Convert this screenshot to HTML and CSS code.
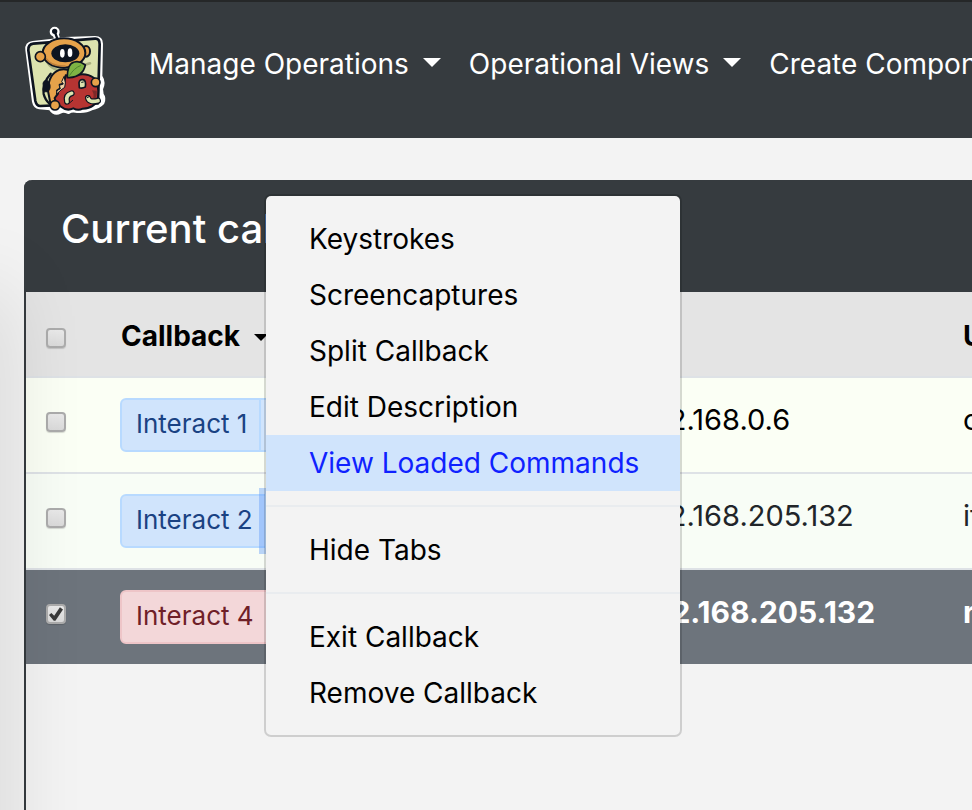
FILE: index.html
```html
<!DOCTYPE html>
<html lang="en">
<head>
<meta charset="utf-8">
<title>Callbacks</title>
<link rel="stylesheet" href="styles.css">
</head>
<body>
<header class="navbar">
  <a class="brand" href="#" aria-label="Home">
    <svg class="logo" viewBox="0 0 330 330" aria-hidden="true">
      <g fill="#fff" stroke="#fff" stroke-width="12" stroke-linejoin="round">
        <circle cx="134" cy="50" r="9"/>
        <path d="M134 50L143 76" stroke-width="18"/>
        <path d="M68 84L128 77L165 72L255 69Q273 69 273 86L271 184Q283 203 273 222L275 238Q284 250 277 264Q266 276 245 280Q228 290 202 288Q185 284 175 291Q160 284 150 290Q134 299 121 280L88 277Q75 275 72 260L52 105Q50 86 68 84Z"/>
      </g>
      <g stroke="#0d1420" stroke-linejoin="round" stroke-linecap="round">
        <path d="M70 86L255 71Q269 70 269 88L264 265L92 273Q80 274 76 258L55 106Q54 88 70 86Z" fill="#dce3ae" stroke-width="8"/>
        <path d="M104 125Q120 172 170 166L240 145" fill="none" stroke="#a9b080" stroke-width="8"/>
        <path d="M144 76L135 52" fill="none" stroke-width="7"/>
        <circle cx="134" cy="49" r="5" fill="#0d1420" stroke-width="6"/>
        <path d="M150 164Q114 176 114 228L121 264L150 272L170 215L194 171Q170 160 150 164Z" fill="#e6a24a" stroke-width="6"/>
        <path d="M122 176Q96 205 101 237Q105 254 119 267" fill="none" stroke-width="7"/>
        <path d="M99 203Q101 195 112 196Q126 210 118 226Q112 234 101 229Z" fill="#0d1420" stroke-width="2"/>
        <ellipse cx="228" cy="109" rx="12" ry="16" fill="#e6a24a" stroke-width="6"/>
        <ellipse cx="162" cy="114" rx="64" ry="44" fill="#e6a24a" stroke-width="6"/>
        <path d="M108 130Q124 155 165 153" fill="none" stroke="#bf803b" stroke-width="5"/>
        <ellipse cx="166" cy="115" rx="42" ry="27" fill="#0d1420" stroke="none"/>
        <circle cx="91" cy="125" r="15" fill="#e6a24a" stroke-width="5"/>
        <path d="M167 181L188 184Q225 170 252 189Q268 203 264 246Q258 279 218 281Q204 288 190 280Q170 290 151 274Q136 262 134 249L144 236L141 227L151 220L149 209L162 205Z" fill="#b63432" stroke-width="6"/>
        <path d="M246 226Q258 247 240 264L252 257Q263 242 260 227Z" fill="#7d2929" stroke="none"/>
        <path d="M162 185L155 200L160 207L148 211L151 221L141 227L139 238L153 225L164 217L166 205Z" fill="#f2d4a6" stroke-width="3"/>
        <path d="M172 188Q172 145 193 141Q210 137 226 150Q219 185 178 188Z" fill="#7eb344" stroke-width="5"/>
        <path d="M179 181Q192 159 211 152" fill="none" stroke="#4f8430" stroke-width="3"/>
        <path d="M208 218L207 203Q209 192 219 194Q229 196 226 216Q216 221 208 218Z" fill="#dce3ae" stroke-width="5"/>
        <path d="M185 235Q166 240 171 260M234 249Q238 264 264 257" fill="none" stroke-width="18"/>
        <path d="M185 235Q166 240 171 260M234 249Q238 264 264 257" fill="none" stroke="#dce3ae" stroke-width="11"/>
        <path d="M181 262L188 256M239 244L232 248M215 202L220 201" fill="none" stroke-width="3"/>
        <circle cx="257" cy="202" r="13" fill="#e6a24a" stroke-width="5"/>
        <circle cx="135" cy="271" r="14" fill="#e6a24a" stroke-width="5"/>
      </g>
      <g fill="#fff"><ellipse cx="157" cy="115" rx="7" ry="13"/><ellipse cx="180" cy="113" rx="7" ry="13"/></g>
    </svg>
  </a>
  <nav class="nav">
    <a href="#">Manage Operations<span class="caret"></span></a>
    <a href="#">Operational Views<span class="caret"></span></a>
    <a href="#">Create Components<span class="caret"></span></a>
  </nav>
</header>
<main class="content">
  <section class="panel">
    <h1 class="panel-title">Current callbacks</h1>
    <table class="callbacks">
      <thead>
        <tr>
          <th class="col-check"><input type="checkbox" aria-label="Select all"></th>
          <th class="col-callback">Callback<span class="caret sort"></span></th>
          <th class="col-ip">IP</th>
          <th>User</th>
        </tr>
      </thead>
      <tbody>
        <tr class="row-first">
          <td class="col-check"><input type="checkbox" aria-label="Select callback 1"></td>
          <td class="col-button"><div class="group"><button type="button">Interact 1</button><button type="button" class="toggle" aria-label="Callback 1 menu"><span class="caret"></span></button></div></td>
          <td>192.168.0.6</td>
          <td>c</td>
        </tr>
        <tr class="row-second">
          <td class="col-check"><input type="checkbox" aria-label="Select callback 2"></td>
          <td class="col-button"><div class="group"><button type="button">Interact 2</button><button type="button" class="toggle active" aria-label="Callback 2 menu"><span class="caret"></span></button></div></td>
          <td>192.168.205.132</td>
          <td>its</td>
        </tr>
        <tr class="row-selected">
          <td class="col-check"><input type="checkbox" checked aria-label="Select callback 4"></td>
          <td class="col-button"><div class="group danger"><button type="button">Interact 4</button><button type="button" class="toggle" aria-label="Callback 4 menu"><span class="caret"></span></button></div></td>
          <td>192.168.205.132</td>
          <td>root</td>
        </tr>
      </tbody>
    </table>
    <div class="menu">
      <a href="#">Keystrokes</a>
      <a href="#">Screencaptures</a>
      <a href="#">Split Callback</a>
      <a href="#">Edit Description</a>
      <a href="#" class="current">View Loaded Commands</a>
      <hr>
      <a href="#">Hide Tabs</a>
      <hr>
      <a href="#">Exit Callback</a>
      <a href="#">Remove Callback</a>
    </div>
  </section>
</main>
</body>
</html>
```
FILE: styles.css
```css
* { box-sizing: border-box; }

body {
  margin: 0;
  min-height: 100vh;
  display: flex;
  flex-direction: column;
  overflow: hidden;
  background: #f3f3f3;
  color: #000;
  font: 28px/42px Inter, "Liberation Sans", sans-serif;
}

/* soft shade along the left edge of the window */
body::after {
  content: "";
  position: fixed;
  top: 290px;
  bottom: -120px;
  left: -40px;
  width: 40px;
  box-shadow: 0 0 80px rgba(0, 0, 0, 0.18);
  pointer-events: none;
}

a { color: inherit; text-decoration: none; }

.navbar {
  display: flex;
  align-items: flex-start;
  gap: 29px;
  height: 138px;
  padding: 13px 0 0 10px;
  border-top: 2px solid #252728;
  background: #363b3f;
  color: #fff;
}

.brand { flex: none; line-height: 0; }
.logo { width: 110px; height: 110px; }

.nav {
  display: flex;
  gap: 28px;
  padding-top: 28px;
  white-space: nowrap;
}

.caret {
  display: inline-block;
  width: 0;
  margin-left: 14px;
  border: 9px solid transparent;
  border-top-color: currentColor;
  border-bottom: 0;
  vertical-align: 7px;
}

.content {
  flex: 1;
  display: flex;
  padding: 42px 0 0 24px;
}

.panel {
  position: relative;
  flex: 1;
  min-width: 0;
  border-left: 2px solid #363b3f;
  border-radius: 8px 0 0 0;
  background: #f3f3f3;
}

.panel-title {
  height: 112px;
  margin: 0 0 0 -2px;
  padding: 23px 37px;
  border-radius: 8px 0 0 0;
  background: #363b3f;
  color: #fff;
  font-size: 40px;
  line-height: 52px;
  font-weight: 500;
}

.callbacks {
  width: 100%;
  table-layout: fixed;
  border-collapse: separate;
  border-spacing: 0;
}

.callbacks th,
.callbacks td {
  height: 96px;
  padding: 21px 0 0 24px;
  border-bottom: 2px solid #dee2e6;
  vertical-align: top;
  text-align: left;
  white-space: nowrap;
  overflow: hidden;
}

.callbacks td { font-size: 29px; }

.callbacks th {
  height: 86px;
  padding-top: 23px;
  background: #e4e4e4;
}

.callbacks .col-check {
  width: 71px;
  padding: 34px 0 0 20px;
  line-height: 0;
}

.callbacks th.col-check { padding-top: 36px; }

.col-callback { width: 518px; }
.col-ip { width: 324px; }
.callbacks .col-button { padding: 20px 0 0 23px; }

.sort { border-width: 7px; border-bottom: 0; vertical-align: 5px; }

.row-first { background: #fbfff5; }
.row-second { background: #f8fdf6; color: #212529; }
.row-selected { background: #6d747c; color: #fff; font-weight: 700; }
.callbacks .row-selected td { height: 94px; border-bottom: 0; font-size: 30px; }

input[type="checkbox"] {
  appearance: none;
  position: relative;
  width: 20px;
  height: 20px;
  margin: 0;
  border: 2px solid #acacac;
  border-radius: 4px;
  background: linear-gradient(#e9e9e9, #dadada);
  box-shadow: 0 1px 1px rgba(0, 0, 0, 0.15);
}

input[type="checkbox"]:checked::after {
  content: "";
  position: absolute;
  inset: 1px;
  background: #3a3a3a;
  clip-path: polygon(0 58%, 17% 43%, 37% 62%, 78% 2%, 100% 17%, 46% 98%, 34% 98%);
}

.group { display: flex; }

.group button {
  height: 54px;
  padding: 0 12px 2px 14px;
  border: 2px solid #b8daff;
  border-radius: 6px 0 0 6px;
  background: #d0e4fc;
  color: #1a4283;
  font: 400 26px/48px Inter, "Liberation Sans", sans-serif;
}

.group .toggle { margin-left: -2px; border-radius: 0 6px 6px 0; }
.group .toggle .caret { margin-left: 0; }
.group .active { box-shadow: 0 0 0 6px rgba(90, 150, 250, 0.4); }
.danger button { border-color: #eec5c8; background: #f3d7d9; color: #6f2028; }

.menu {
  position: absolute;
  top: 14px;
  left: 238px;
  width: 418px;
  padding: 15px 0 14px;
  border: 2px solid rgba(0, 0, 0, 0.15);
  border-radius: 7px;
  background: #f3f3f3;
  background-clip: padding-box;
}

.menu a {
  display: block;
  padding: 7px 43px;
  white-space: nowrap;
}

.menu .current { background: #d0e4fc; color: #0f22ff; }

.menu hr {
  height: 2px;
  margin: 14px 0 15px;
  border: 0;
  background: #e9ecef;
}
```
